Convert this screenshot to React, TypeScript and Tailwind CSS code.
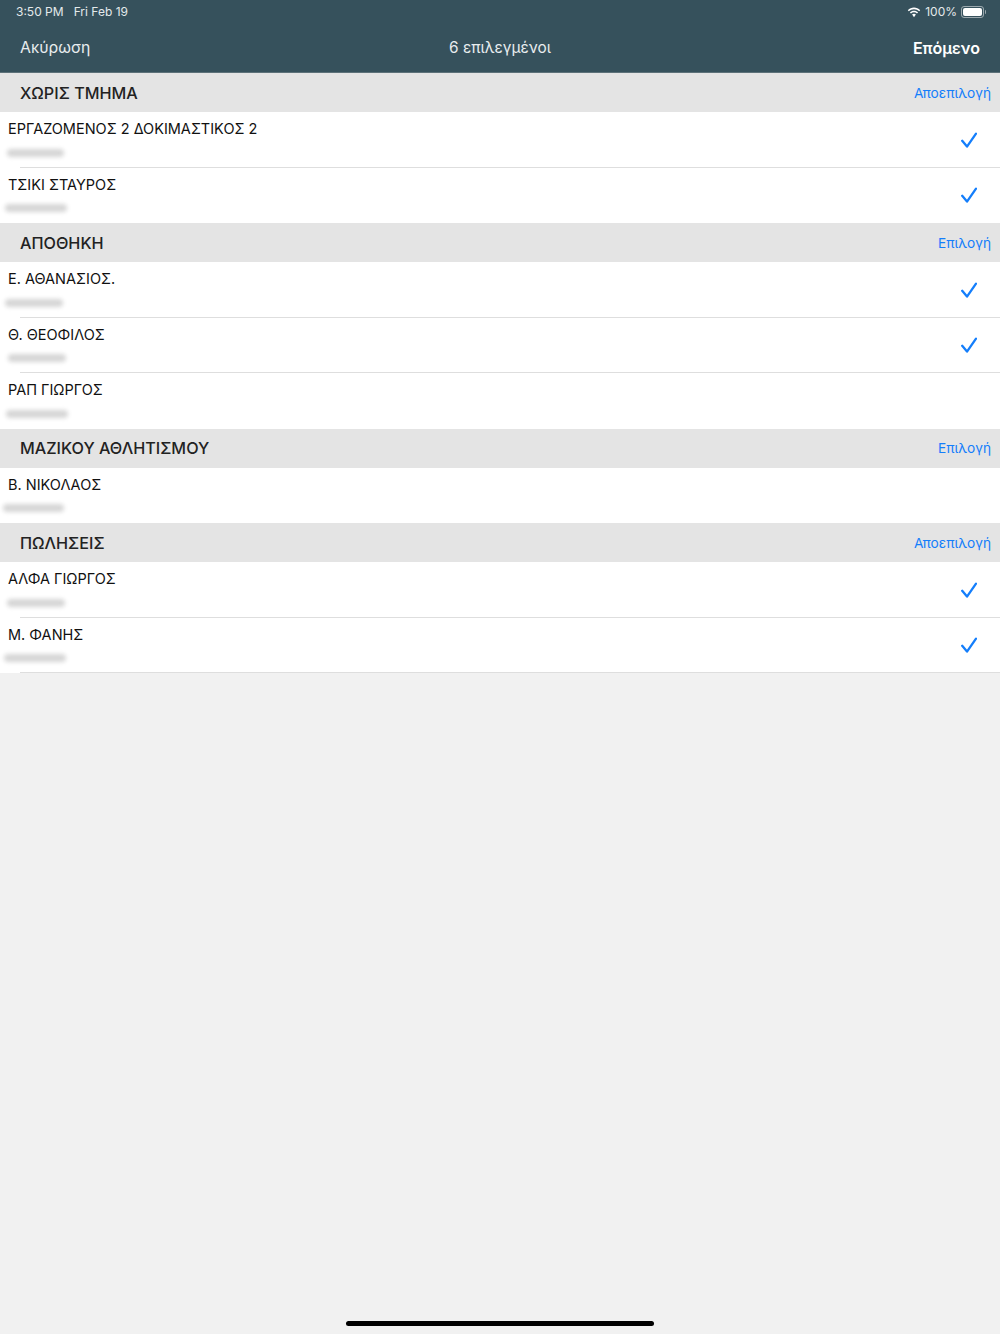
import React from 'react';

type Person = { name: string; checked: boolean; smudge: string };
type Section = { title: string; action: string; people: Person[] };

const sections: Section[] = [
    {
        title: 'ΧΩΡΙΣ ΤΜΗΜΑ', action: 'Αποεπιλογή', people: [
            { name: 'ΕΡΓΑΖΟΜΕΝΟΣ 2 ΔΟΚΙΜΑΣΤΙΚΟΣ 2', checked: true, smudge: 'ml-[7px] w-[57px]' },
            { name: 'ΤΣΙΚΙ ΣΤΑΥΡΟΣ', checked: true, smudge: 'ml-[5px] w-[62px]' },
        ],
    },
    {
        title: 'ΑΠΟΘΗΚΗ', action: 'Επιλογή', people: [
            { name: 'Ε. ΑΘΑΝΑΣΙΟΣ.', checked: true, smudge: 'ml-[5px] w-[58px]' },
            { name: 'Θ. ΘΕΟΦΙΛΟΣ', checked: true, smudge: 'ml-[8px] w-[58px]' },
            { name: 'ΡΑΠ ΓΙΩΡΓΟΣ', checked: false, smudge: 'ml-[6px] w-[62px]' },
        ],
    },
    {
        title: 'ΜΑΖΙΚΟΥ ΑΘΛΗΤΙΣΜΟΥ', action: 'Επιλογή', people: [
            { name: 'Β. ΝΙΚΟΛΑΟΣ', checked: false, smudge: 'ml-[3px] w-[61px]' },
        ],
    },
    {
        title: 'ΠΩΛΗΣΕΙΣ', action: 'Αποεπιλογή', people: [
            { name: 'ΑΛΦΑ ΓΙΩΡΓΟΣ', checked: true, smudge: 'ml-[7px] w-[58px]' },
            { name: 'Μ. ΦΑΝΗΣ', checked: true, smudge: 'ml-[4px] w-[62px]' },
        ],
    },
];

const Check = () => (
    <svg width="16" height="16" viewBox="0 0 16 16" fill="none" stroke="#147efb" strokeWidth="2.3" strokeLinecap="round" strokeLinejoin="round">
        <path d="M1.2 8.8 L6 14.6 L15 1.6" />
    </svg>
);

const Wifi = () => (
    <svg width="14" height="11" viewBox="0 0 14 11" fill="white">
        <path d="M7 2.2c2 0 3.8.8 5.2 2.1l1-1.1C11.5 1.6 9.4.6 7 .6S2.500 1.600.8 3.200l1 1.100C3.200 3 5 2.200 7 2.200z" />
        <path d="M7 5.300c1.200 0 2.200.4 3 1.200l1.100-1.100C10 4.300 8.600 3.700 7 3.700s-3 .6-4.100 1.700L4 6.500c.8-.8 1.800-1.200 3-1.200z" />
        <path d="M7 6.800c-.8 0-1.400.3-1.900.8L7 10.200l1.900-2.600c-.5-.5-1.100-.8-1.900-.8z" />
    </svg>
);

const Battery = () => (
    <div className="flex items-center">
        <div className="w-[23px] h-[12px] rounded-[3px] border border-white/50 p-[1px]">
            <div className="w-full h-full rounded-[2px] bg-white" />
        </div>
        <div className="w-[1.5px] h-[4px] rounded-r-sm bg-white/50 ml-[0.5px]" />
    </div>
);

export default function App() {
    return (
        <div className="w-[1000px] h-[1334px] relative overflow-hidden bg-[#f1f1f1] font-['Inter','Liberation_Sans',sans-serif]">
            <div className="h-[73px] bg-[#36515c] border-b border-[#5d7179] text-white">
                <div className="h-[24px] pl-[16px] pr-[14px] flex items-center justify-between text-[12px] text-[#e4e9eb]">
                    <div className="flex gap-[10px]">
                        <span>3:50 PM</span>
                        <span>Fri Feb 19</span>
                    </div>
                    <div className="flex items-center gap-[4px] pl-[1px]">
                        <Wifi />
                        <span>100%</span>
                        <Battery />
                    </div>
                </div>
                <div className="h-[48px] px-[20px] flex items-center justify-between leading-[24px]">
                    <span className="w-[120px] text-[15.8px] text-[#e8ecee]">Ακύρωση</span>
                    <span className="text-[15.4px] text-[#e8ecee]">6 επιλεγμένοι</span>
                    <span className="w-[120px] text-right text-[16px] font-semibold">Επόμενο</span>
                </div>
            </div>
            {sections.map((section) => (
                <div key={section.title}>
                    <div className="h-[39px] pl-[20px] pr-[9px] bg-[#e4e4e4] flex items-center justify-between leading-[24px]">
                        <span className="text-[16.2px] font-medium text-[#222222]">{section.title}</span>
                        <span className="text-[13.7px] text-[#147efb]">{section.action}</span>
                    </div>
                    <div>
                        {section.people.map((person, i) => {
                            const isLast = i === section.people.length - 1;
                            const showLine = !isLast || section.title === 'ΠΩΛΗΣΕΙΣ';
                            return (
                                <div key={person.name} className="h-[55.5px] relative bg-white flex items-center justify-between pr-[23px]">
                                    <div className="flex flex-col self-start">
                                        <span className="pl-[8px] pt-[8px] text-[14.5px] leading-[18px] text-[#111111]">{person.name}</span>
                                        <div className={`mt-[10.5px] h-[8px] rounded-full bg-[#d6d6d6] blur-[2px] ${person.smudge}`} />
                                    </div>
                                    {person.checked && <Check />}
                                    {showLine && <div className="absolute left-[20px] right-0 bottom-0 h-px bg-[#dedede]" />}
                                </div>
                            );
                        })}
                    </div>
                </div>
            ))}
            <div className="absolute left-[346px] bottom-[8px] w-[308px] h-[5px] rounded-full bg-black" />
        </div>
    );
}
